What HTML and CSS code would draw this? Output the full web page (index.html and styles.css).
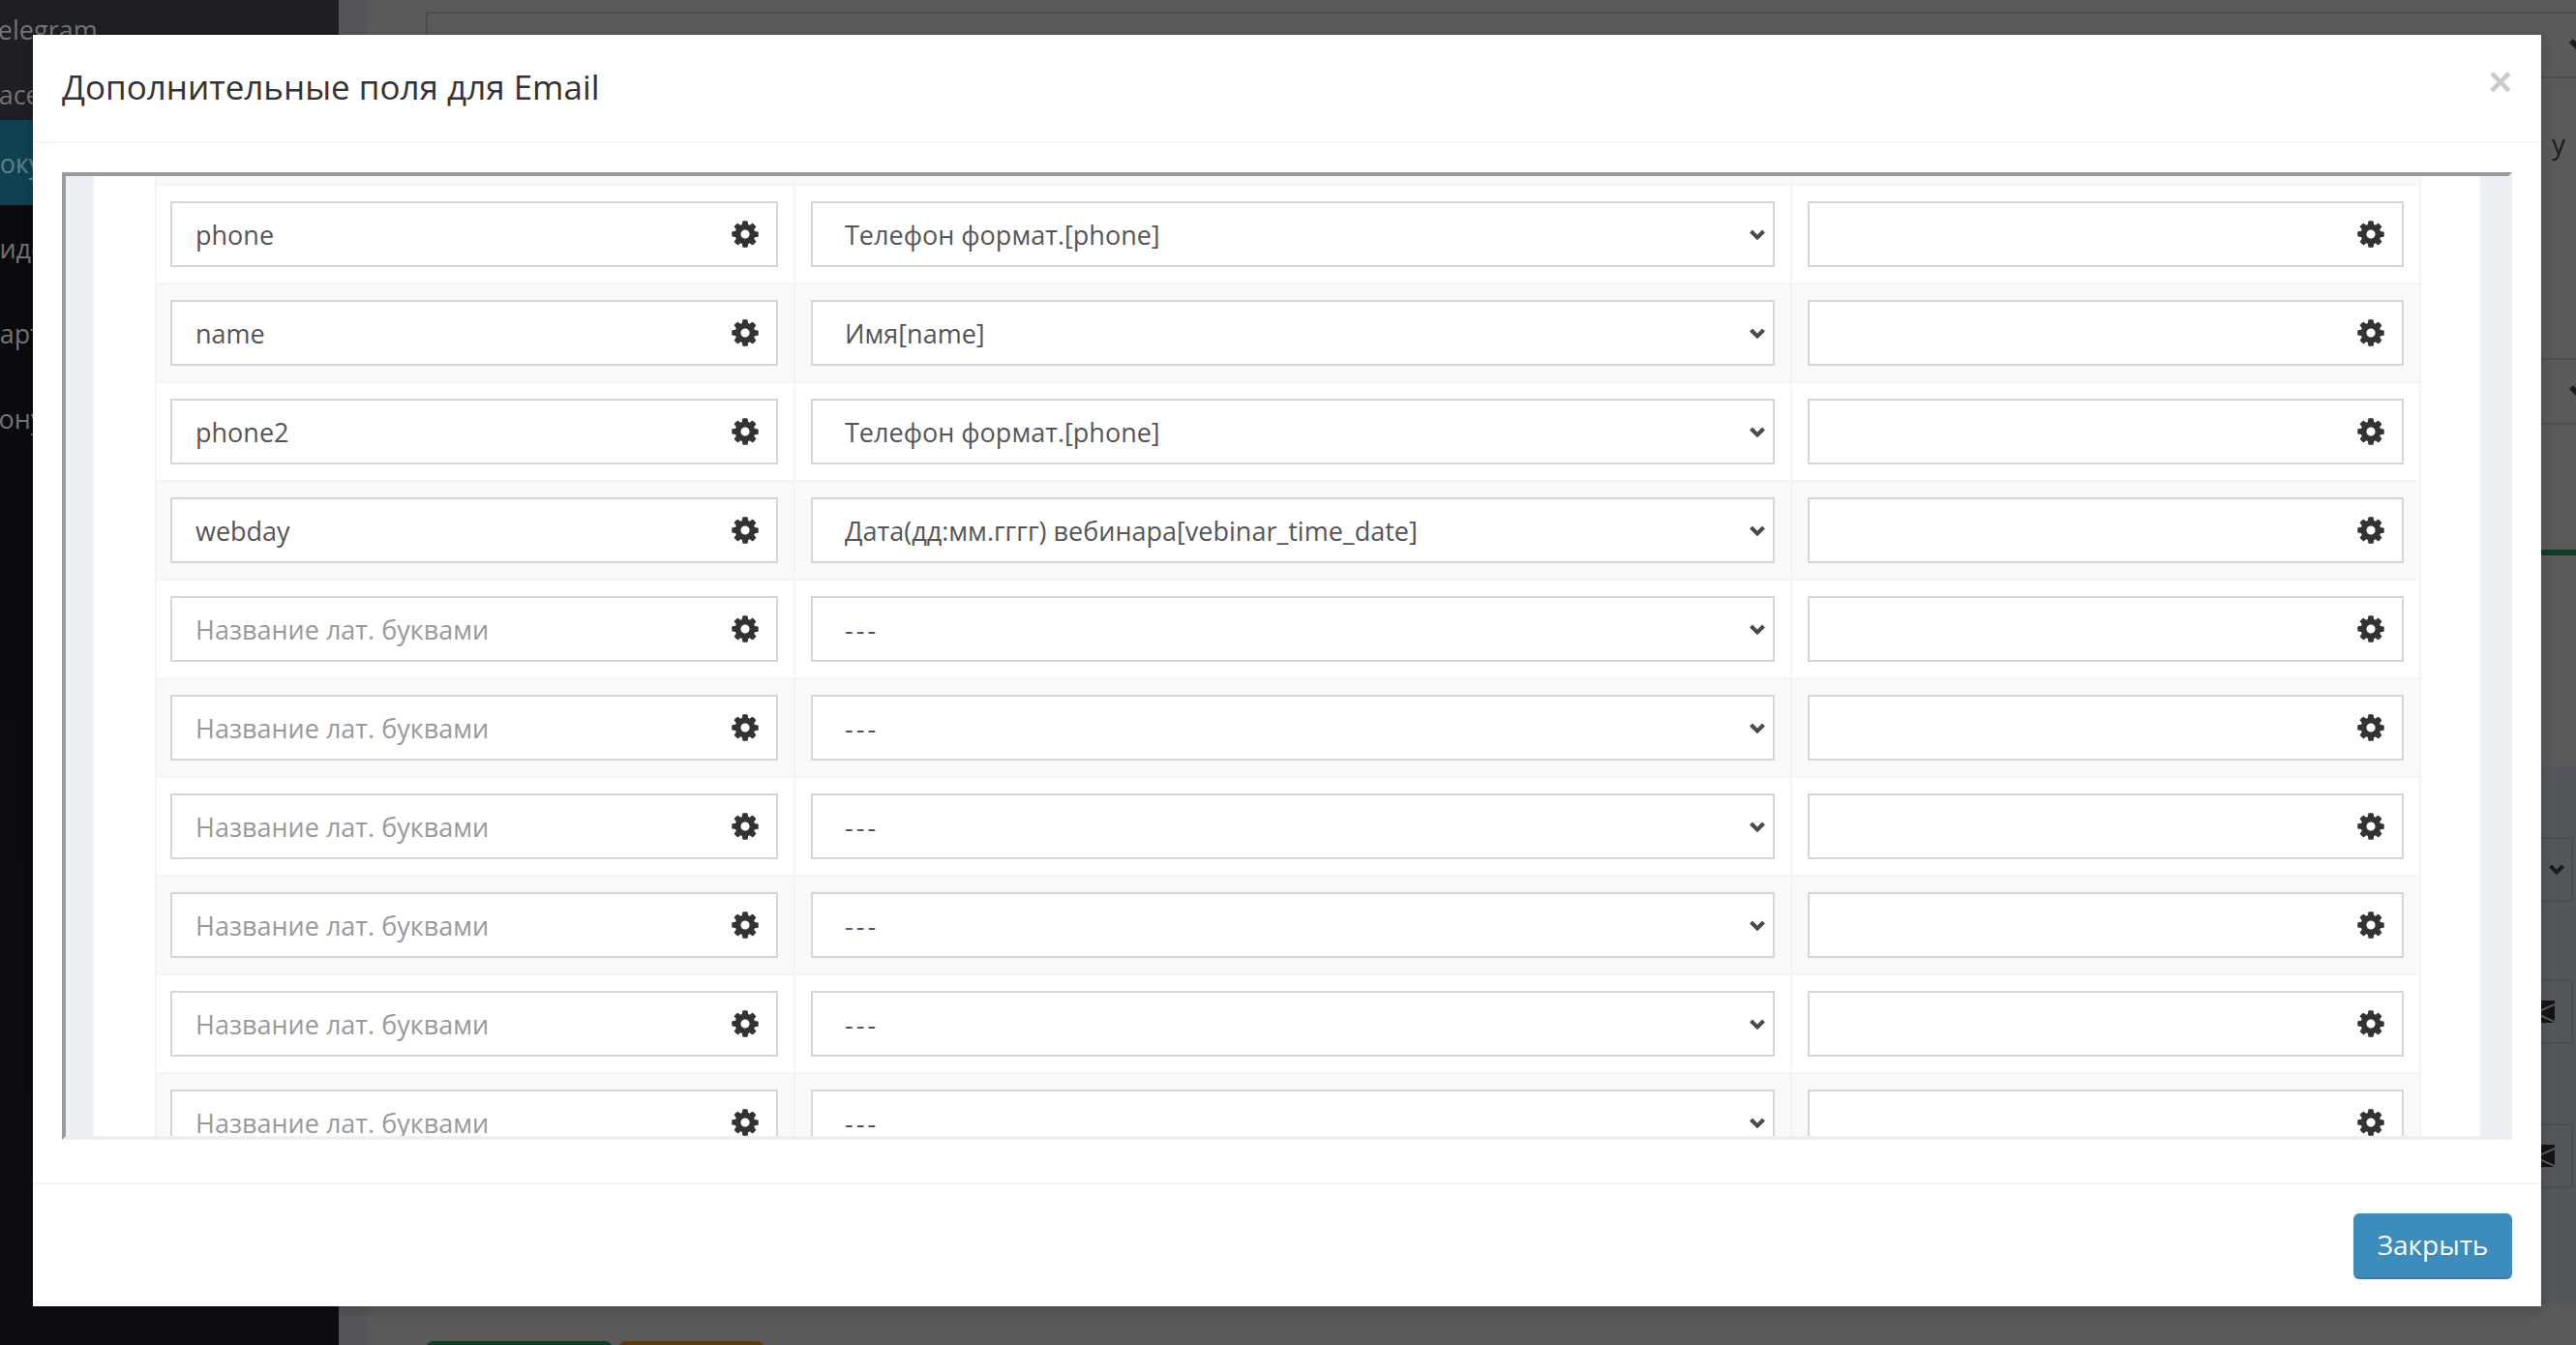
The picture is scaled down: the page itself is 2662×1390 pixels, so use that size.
FILE: index.html
```html
<!DOCTYPE html>
<html lang="ru">
<head>
<meta charset="utf-8">
<title>Дополнительные поля для Email</title>
<link rel="stylesheet" href="styles.css">
</head>
<body>
<svg class="defs" width="0" height="0" aria-hidden="true"><defs>
<symbol id="cog" viewBox="0 0 1792 1792"><path d="M1152 896q0-106-75-181t-181-75-181 75-75 181 75 181 181 75 181-75 75-181zm512-109v222q0 12-8 23t-20 13l-185 28q-19 54-39 91 35 50 107 138 10 12 10 25t-9 23q-27 37-99 108t-94 71q-12 0-26-9l-138-108q-44 23-91 38-16 136-29 186-7 28-36 28h-222q-14 0-24.500-8.500t-11.500-21.500l-28-184q-49-16-90-37l-141 107q-10 9-25 9-14 0-25-11-126-114-165-168-7-10-7-23 0-12 8-23 15-21 51-66.500t54-70.500q-27-50-41-99l-183-27q-13-2-21-12.500t-8-23.500v-222q0-12 8-23t19-13l186-28q14-46 39-92-40-57-107-138-10-12-10-24 0-10 9-23 26-36 98.500-107.500t94.500-71.500q13 0 26 10l138 107q44-23 91-38 16-136 29-186 7-28 36-28h222q14 0 24.500 8.500t11.500 21.500l28 184q49 16 90 37l142-107q9-9 24-9 13 0 25 10 129 119 165 170 7 8 7 22 0 12-8 23-15 21-51 66.500t-54 70.500q26 50 41 98l183 28q13 2 21 12.500t8 23.500z"/></symbol>
<symbol id="chev" viewBox="0 0 18 13"><polyline points="2.500,3 9,9.500 15.500,3" fill="none" stroke-width="4"/></symbol>
<symbol id="env" viewBox="0 0 28 23"><rect width="28" height="23" fill="#141414"/><path d="M28 4 8 13l20 9" fill="none" stroke="#5a5a5a" stroke-width="2"/></symbol>
</defs></svg>

<div class="page">
  <aside class="sidebar">
    <div class="nav-item nav-a">Telegram</div>
    <div class="nav-item nav-b">Marketplace</div>
    <div class="nav-item nav-active">Покупки</div>
    <div class="nav-item">Видео</div>
    <div class="nav-item nav-p">Партнёрам</div>
    <div class="nav-item">Бонусы</div>
  </aside>
  <div class="gutter"></div>
  <main class="content">
    <div class="bg-box"><svg class="bg-chev"><use href="#chev"/></svg></div>
    <div class="bg-text">у</div>
    <div class="bg-box bg-box-two"><svg class="bg-chev"><use href="#chev"/></svg></div>
    <div class="bg-green"></div>
    <div class="bg-panel">
      <div class="bg-ctl"><svg class="bg-chev-small"><use href="#chev"/></svg></div>
      <div class="bg-ctl bg-ctl-mail"><svg class="bg-env"><use href="#env"/></svg></div>
      <div class="bg-ctl bg-ctl-mail2"><svg class="bg-env"><use href="#env"/></svg></div>
    </div>
    <div class="bg-buttons"><span class="bg-btn-green"></span><span class="bg-btn-orange"></span></div>
  </main>
</div>

<section class="modal">
  <header class="modal-header">
    <h4 class="modal-title">Дополнительные поля для Email</h4>
    <button class="close" type="button">×</button>
  </header>
  <div class="modal-body">
    <div class="frame">
      <div class="band"></div>
      <div class="frame-main">
        <div class="table">
          <div class="row row-stub"><div class="cell"></div><div class="cell"></div><div class="cell"></div></div>

          <div class="row">
            <div class="cell"><label class="field"><input value="phone" placeholder="Название лат. буквами"><svg class="cog"><use href="#cog"/></svg></label></div>
            <div class="cell"><label class="field"><select><option>Телефон формат.[phone]</option></select><svg class="chev"><use href="#chev"/></svg></label></div>
            <div class="cell"><label class="field"><input><svg class="cog"><use href="#cog"/></svg></label></div>
          </div>
          <div class="row">
            <div class="cell"><label class="field"><input value="name" placeholder="Название лат. буквами"><svg class="cog"><use href="#cog"/></svg></label></div>
            <div class="cell"><label class="field"><select><option>Имя[name]</option></select><svg class="chev"><use href="#chev"/></svg></label></div>
            <div class="cell"><label class="field"><input><svg class="cog"><use href="#cog"/></svg></label></div>
          </div>
          <div class="row">
            <div class="cell"><label class="field"><input value="phone2" placeholder="Название лат. буквами"><svg class="cog"><use href="#cog"/></svg></label></div>
            <div class="cell"><label class="field"><select><option>Телефон формат.[phone]</option></select><svg class="chev"><use href="#chev"/></svg></label></div>
            <div class="cell"><label class="field"><input><svg class="cog"><use href="#cog"/></svg></label></div>
          </div>
          <div class="row">
            <div class="cell"><label class="field"><input value="webday" placeholder="Название лат. буквами"><svg class="cog"><use href="#cog"/></svg></label></div>
            <div class="cell"><label class="field"><select><option>Дата(дд:мм.гггг) вебинара[vebinar_time_date]</option></select><svg class="chev"><use href="#chev"/></svg></label></div>
            <div class="cell"><label class="field"><input><svg class="cog"><use href="#cog"/></svg></label></div>
          </div>
          <div class="row">
            <div class="cell"><label class="field"><input placeholder="Название лат. буквами"><svg class="cog"><use href="#cog"/></svg></label></div>
            <div class="cell"><label class="field"><select class="dash"><option>---</option></select><svg class="chev"><use href="#chev"/></svg></label></div>
            <div class="cell"><label class="field"><input><svg class="cog"><use href="#cog"/></svg></label></div>
          </div>
          <div class="row">
            <div class="cell"><label class="field"><input placeholder="Название лат. буквами"><svg class="cog"><use href="#cog"/></svg></label></div>
            <div class="cell"><label class="field"><select class="dash"><option>---</option></select><svg class="chev"><use href="#chev"/></svg></label></div>
            <div class="cell"><label class="field"><input><svg class="cog"><use href="#cog"/></svg></label></div>
          </div>
          <div class="row">
            <div class="cell"><label class="field"><input placeholder="Название лат. буквами"><svg class="cog"><use href="#cog"/></svg></label></div>
            <div class="cell"><label class="field"><select class="dash"><option>---</option></select><svg class="chev"><use href="#chev"/></svg></label></div>
            <div class="cell"><label class="field"><input><svg class="cog"><use href="#cog"/></svg></label></div>
          </div>
          <div class="row">
            <div class="cell"><label class="field"><input placeholder="Название лат. буквами"><svg class="cog"><use href="#cog"/></svg></label></div>
            <div class="cell"><label class="field"><select class="dash"><option>---</option></select><svg class="chev"><use href="#chev"/></svg></label></div>
            <div class="cell"><label class="field"><input><svg class="cog"><use href="#cog"/></svg></label></div>
          </div>
          <div class="row">
            <div class="cell"><label class="field"><input placeholder="Название лат. буквами"><svg class="cog"><use href="#cog"/></svg></label></div>
            <div class="cell"><label class="field"><select class="dash"><option>---</option></select><svg class="chev"><use href="#chev"/></svg></label></div>
            <div class="cell"><label class="field"><input><svg class="cog"><use href="#cog"/></svg></label></div>
          </div>
          <div class="row">
            <div class="cell"><label class="field"><input placeholder="Название лат. буквами"><svg class="cog"><use href="#cog"/></svg></label></div>
            <div class="cell"><label class="field"><select class="dash"><option>---</option></select><svg class="chev"><use href="#chev"/></svg></label></div>
            <div class="cell"><label class="field"><input><svg class="cog"><use href="#cog"/></svg></label></div>
          </div>
        </div>
      </div>
      <div class="band band-right"></div>
    </div>
  </div>
  <footer class="modal-footer">
    <button class="btn" type="button">Закрыть</button>
  </footer>
</section>
</body>
</html>
```
FILE: styles.css
```css
* { box-sizing: border-box; }
html, body { margin: 0; height: 100%; overflow: hidden; }
body { font-family: "Open Sans", "Noto Sans", sans-serif; color: #333; background: #5a5a5a; }
.defs { position: absolute; }

/* dimmed page behind the dialog */
.page { display: flex; height: 1390px; }
.sidebar {
  width: 350px; flex: none; overflow: hidden;
  background: linear-gradient(#1d1f24 0, #1d1f24 124px, #0a0b0e 212px, #0c0e13 100%);
  color: #747474; font-size: 27px;
}
.nav-item { height: 88px; display: flex; align-items: center; margin-left: -18px; }
.nav-a { height: 60px; margin-left: -17px; }
.nav-b { height: 64px; padding-top: 10px; margin-left: -114px; }
.nav-p { margin-left: -20px; }
.nav-active { background: #0f4251; margin-left: 0; text-indent: -20px; color: #60808a; }
.gutter { width: 30px; flex: none; background: #54565a; }
.content { flex: 1; min-width: 0; padding: 12px 0 0 60px; display: flex; flex-direction: column; }
.bg-box {
  height: 69px; flex: none; display: flex; justify-content: flex-end; align-items: center;
  border-top: 2px solid #4e4e4e; border-bottom: 2px solid #4e4e4e; border-left: 2px solid #4e4e4e;
}
.bg-chev { width: 26px; height: 18px; flex: none; stroke: #1c1c1c; margin-right: -17px; }
.bg-text { height: 289px; flex: none; text-align: right; padding: 45px 11px 0 0; color: #1c1c1c; font-size: 28px; line-height: 44px; }
.bg-box-two { border-left: 0; }
.bg-green { height: 6px; flex: none; margin-top: 129px; background: #0f3d25; }
.bg-panel { height: 555px; flex: none; margin-top: 218px; margin-left: -60px; background: #53565a; display: flex; flex-direction: column; align-items: flex-end; padding: 73px 3px 0 0; }
.bg-ctl { width: 200px; height: 67px; flex: none; border: 2px solid #4c4e50; display: flex; align-items: center; justify-content: flex-end; padding-right: 6px; }
.bg-ctl-mail { margin-top: 80px; padding-right: 17px; }
.bg-ctl-mail2 { margin-top: 82px; padding-right: 17px; }
.bg-chev-small { width: 18px; height: 13px; stroke: #1c1c1c; }
.bg-env { width: 28px; height: 23px; }
.bg-buttons { display: flex; gap: 6px; margin-top: 39px; }
.bg-btn-green, .bg-btn-orange { height: 10px; border-radius: 8px 8px 0 0; }
.bg-btn-green { width: 193px; background: #0f3d25; }
.bg-btn-orange { width: 151px; background: #5a3a0c; }

/* dialog */
.modal {
  position: absolute; left: 34px; top: 36px; width: 2592px; height: 1314px;
  background: #fff; display: flex; flex-direction: column;
  box-shadow: 0 4px 12px rgba(0, 0, 0, .2);
}
.modal-header {
  height: 112px; flex: none; display: flex; align-items: center; justify-content: space-between;
  padding: 0 30px; border-bottom: 2px solid #f4f4f4;
}
.modal-title { margin: 0 0 3px; font-size: 35px; line-height: 50px; font-weight: 400; color: #333; }
.close {
  border: 0; background: none; padding: 0; margin: 0 0 13px;
  font: 700 42px/42px "Liberation Sans", sans-serif; color: #000; opacity: .2;
}
.modal-body { height: 1074px; flex: none; padding: 30px 30px 42px; }
.frame {
  height: 1000px; display: flex; overflow: hidden;
  border-style: solid; border-width: 4px; border-color: #9a9a9a #eee #eee #9a9a9a;
}
.band { width: 30px; flex: none; background: #ecf0f5; border-right: 2px solid #f4f6f9; }
.band-right { width: 30px; border-right: 0; border-left: 2px solid #f4f6f9; }
.frame-main { flex: 1; min-width: 0; padding-left: 62px; overflow: hidden; }
.table { width: 2342px; }
.row { display: grid; grid-template-columns: 660px 1030px 650px; border-top: 2px solid #f4f4f4; border-right: 2px solid #f4f4f4; }
.row:nth-child(odd) { background: #f9f9f9; }
.row-stub { border-top: 0; height: 8px; }
.cell { padding: 16px; border-left: 2px solid #f4f4f4; }
.cell:first-child { padding-left: 14px; }
.row-stub .cell { padding: 0; }
.field {
  height: 68px; display: flex; align-items: center; background: #fff;
  border: 2px solid #d2d6de;
}
.field input, .field select {
  flex: 1; min-width: 0; height: 100%; border: 0; outline: 0; background: none;
  font: 400 27px "Open Sans", "Noto Sans", sans-serif; color: #555;
  padding: 0 0 0 24px;
}
.field select { appearance: none; -webkit-appearance: none; padding-left: 33px; }
.field select.dash { letter-spacing: 3px; }
.field input::placeholder { color: #999; opacity: 1; }
.cog { width: 32px; height: 32px; flex: none; margin: 0 16px; fill: #333; }
.chev { width: 18px; height: 13px; flex: none; margin-right: 7px; margin-left: 8px; stroke: #4a4a4a; }

.modal-footer {
  flex: 1; display: flex; justify-content: flex-end; align-items: flex-start;
  padding: 30px; border-top: 2px solid #f4f4f4;
}
.btn {
  width: 164px; height: 68px; border: 0; border-bottom: 2px solid #367fa9; border-radius: 6px;
  background: #3c8dbc; color: #fff; font: 400 28px "Open Sans", "Noto Sans", sans-serif; padding: 0 0 2px;
}
```
